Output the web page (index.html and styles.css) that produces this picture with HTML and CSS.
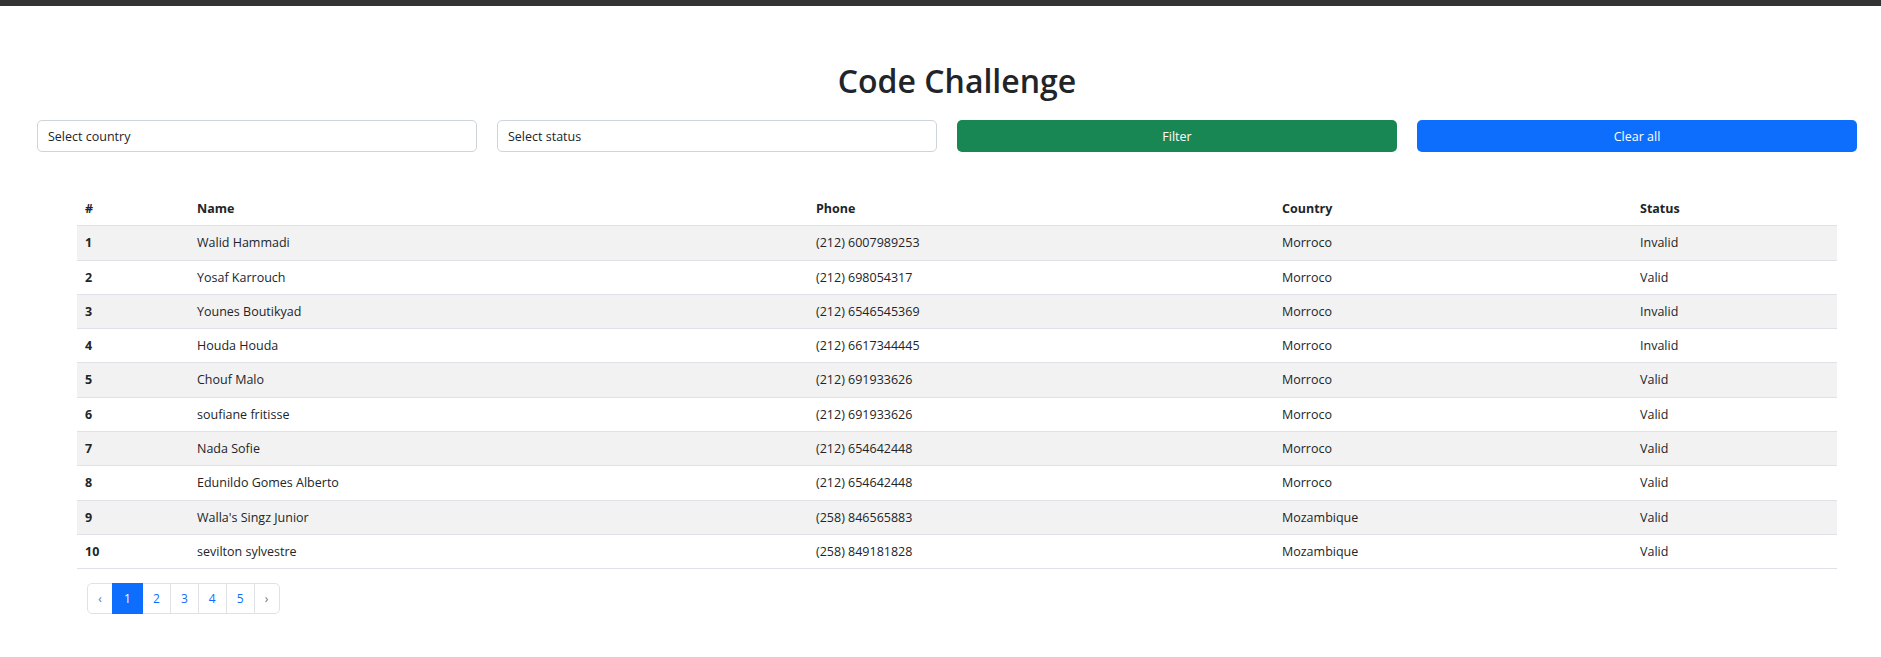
FILE: index.html
```html
<!DOCTYPE html>
<html lang="en">
<head>
<meta charset="utf-8">
<title>Code Challenge</title>
<link rel="stylesheet" href="styles.css">
</head>
<body>
<div class="topbar"></div>
<main class="page">
  <h1 class="title">Code Challenge</h1>
  <div class="filters">
    <div class="select">Select country</div>
    <div class="select">Select status</div>
    <button class="btn btn-green">Filter</button>
    <button class="btn btn-blue">Clear all</button>
  </div>
  <section class="table-wrap">
    <table class="grid">
      <thead>
        <tr><th class="c-num">#</th><th class="c-name">Name</th><th class="c-phone">Phone</th><th class="c-country">Country</th><th class="c-status">Status</th></tr>
      </thead>
      <tbody>
        <tr><th>1</th><td>Walid Hammadi</td><td>(212) 6007989253</td><td>Morroco</td><td>Invalid</td></tr>
        <tr><th>2</th><td>Yosaf Karrouch</td><td>(212) 698054317</td><td>Morroco</td><td>Valid</td></tr>
        <tr><th>3</th><td>Younes Boutikyad</td><td>(212) 6546545369</td><td>Morroco</td><td>Invalid</td></tr>
        <tr><th>4</th><td>Houda Houda</td><td>(212) 6617344445</td><td>Morroco</td><td>Invalid</td></tr>
        <tr><th>5</th><td>Chouf Malo</td><td>(212) 691933626</td><td>Morroco</td><td>Valid</td></tr>
        <tr><th>6</th><td>soufiane fritisse</td><td>(212) 691933626</td><td>Morroco</td><td>Valid</td></tr>
        <tr><th>7</th><td>Nada Sofie</td><td>(212) 654642448</td><td>Morroco</td><td>Valid</td></tr>
        <tr><th>8</th><td>Edunildo Gomes Alberto</td><td>(212) 654642448</td><td>Morroco</td><td>Valid</td></tr>
        <tr><th>9</th><td>Walla's Singz Junior</td><td>(258) 846565883</td><td>Mozambique</td><td>Valid</td></tr>
        <tr><th>10</th><td>sevilton sylvestre</td><td>(258) 849181828</td><td>Mozambique</td><td>Valid</td></tr>
      </tbody>
    </table>
    <ul class="pager">
      <li class="pg pg-arrow">‹</li>
      <li class="pg pg-active">1</li>
      <li class="pg">2</li>
      <li class="pg">3</li>
      <li class="pg">4</li>
      <li class="pg">5</li>
      <li class="pg pg-arrow">›</li>
    </ul>
  </section>
</main>
</body>
</html>
```
FILE: styles.css
```css
* { box-sizing: border-box; }
html, body { margin: 0; padding: 0; }
body {
  font-family: "Open Sans", "Noto Sans", "Liberation Sans", sans-serif;
  font-size: 13px;
  color: #212529;
  background: #fff;
}
.topbar { height: 6px; background: #333333; }
.title {
  margin: 0;
  padding: 55px 44px 0 77px;
  height: 114px;
  text-align: center;
  font-size: 32px;
  font-weight: 600;
  line-height: 40px;
  color: #212529;
}
.filters {
  display: grid;
  grid-template-columns: repeat(4, 1fr);
  column-gap: 20px;
  padding: 0 24px 0 37px;
}
.select {
  height: 32px;
  border: 1px solid #ced4da;
  border-radius: 5px;
  padding: 0 10px;
  line-height: 31px;
  font-size: 12.5px;
  color: #212529;
  background: #fff;
}
.btn {
  height: 32px;
  border: 0;
  border-radius: 5px;
  font-family: inherit;
  font-size: 12.5px;
  color: #fff;
  padding: 0;
}
.btn-green { background: #198754; }
.btn-blue { background: #0d6efd; }
.table-wrap { padding: 40px 44px 0 77px; }
.grid {
  width: 100%;
  border-collapse: collapse;
  font-size: 12.5px;
}
.grid th, .grid td {
  text-align: left;
  padding: 8px 8px;
  line-height: 17.3px;
  border-bottom: 1px solid #dee2e6;
}
.grid th { font-weight: 700; }
.grid tbody tr:nth-child(odd) { background: #f2f2f2; }
.c-num { width: 112px; }
.c-name { width: 619px; }
.c-phone { width: 466px; }
.c-country { width: 358px; }
.c-status { width: auto; }
.pager {
  list-style: none;
  display: flex;
  margin: 14px 0 0 10px;
  padding: 0;
}
.pg {
  height: 31px;
  min-width: 28px;
  padding: 0 10px;
  line-height: 29px;
  text-align: center;
  border: 1px solid #dee2e6;
  margin-left: -1px;
  color: #0d6efd;
  font-size: 12px;
  background: #fff;
}
.pg:first-child { border-radius: 5px 0 0 5px; margin-left: 0; }
.pg:last-child { border-radius: 0 5px 5px 0; }
.pg-arrow { color: #6c757d; min-width: 26px; padding: 0 9px; }
.pg-active { background: #0d6efd; border-color: #0d6efd; color: #fff; min-width: 31px; padding: 0 11px; position: relative; z-index: 1; }
```
